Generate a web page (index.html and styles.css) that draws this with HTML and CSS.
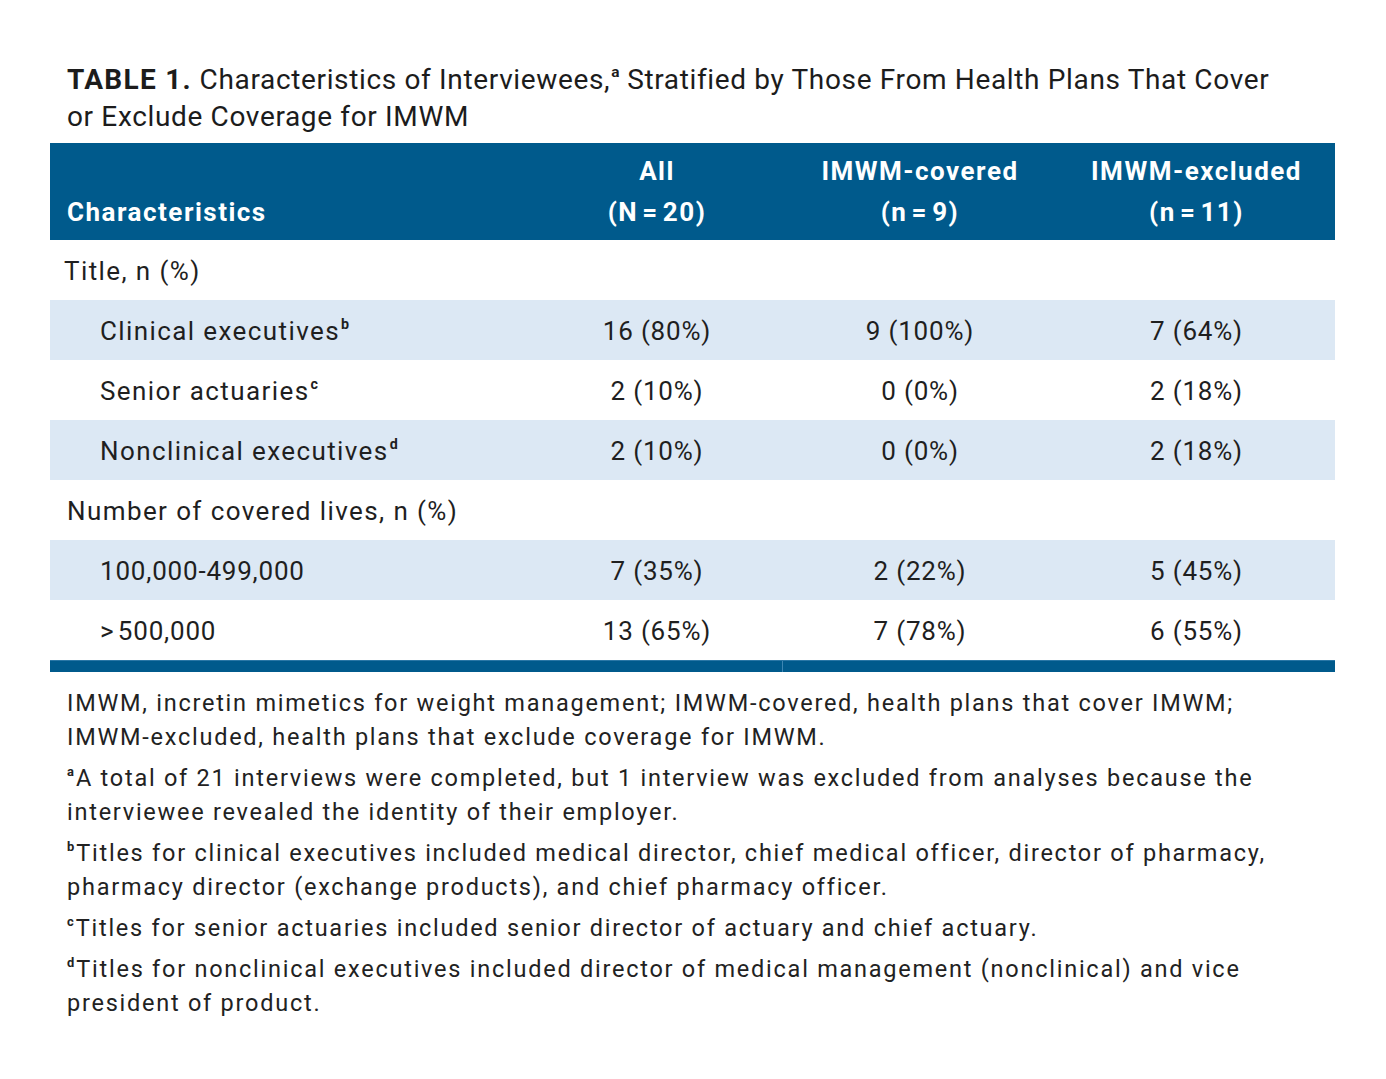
FILE: index.html
```html
<!DOCTYPE html>
<html lang="en">
<head>
<meta charset="utf-8">
<title>Table 1</title>
<link rel="stylesheet" href="styles.css">
</head>
<body>
<div class="page">
  <h1 class="caption"><span class="label">TABLE 1.</span> Characteristics of Interviewees,<sup class="fn">a</sup> Stratified by Those From Health Plans That Cover or Exclude Coverage for IMWM</h1>
  <table class="data">
    <colgroup>
      <col class="c0"><col class="c1"><col class="c2"><col class="c3">
    </colgroup>
    <thead>
      <tr>
        <th class="first">Characteristics</th>
        <th>All<br>(N&#8202;=&#8202;20)</th>
        <th>IMWM-covered<br>(n&#8202;=&#8202;9)</th>
        <th>IMWM-excluded<br>(n&#8202;=&#8202;11)</th>
      </tr>
    </thead>
    <tbody>
      <tr class="group"><td class="first g1">Title, n (%)</td><td></td><td></td><td></td></tr>
      <tr class="shade"><td class="first sub">Clinical executives<sup class="fn">b</sup></td><td class="num">16 (80%)</td><td class="num">9 (100%)</td><td class="num">7 (64%)</td></tr>
      <tr><td class="first sub">Senior actuaries<sup class="fn">c</sup></td><td class="num">2 (10%)</td><td class="num">0 (0%)</td><td class="num">2 (18%)</td></tr>
      <tr class="shade"><td class="first sub">Nonclinical executives<sup class="fn">d</sup></td><td class="num">2 (10%)</td><td class="num">0 (0%)</td><td class="num">2 (18%)</td></tr>
      <tr class="group"><td class="first">Number of covered lives, n (%)</td><td></td><td></td><td></td></tr>
      <tr class="shade"><td class="first sub num">100,000-499,000</td><td class="num">7 (35%)</td><td class="num">2 (22%)</td><td class="num">5 (45%)</td></tr>
      <tr><td class="first sub num">&gt;&#8202;500,000</td><td class="num">13 (65%)</td><td class="num">7 (78%)</td><td class="num">6 (55%)</td></tr>
    </tbody>
    <tfoot>
      <tr class="bar"><td colspan="2"></td><td class="seam" colspan="2"></td></tr>
    </tfoot>
  </table>
  <div class="notes">
    <p>IMWM, incretin mimetics for weight management; IMWM-covered, health plans that cover IMWM; IMWM-excluded, health plans that exclude coverage for IMWM.</p>
    <p><sup class="fn lead">a</sup>A total of 21 interviews were completed, but 1 interview was excluded from analyses because the interviewee revealed the identity of their employer.</p>
    <p><sup class="fn lead">b</sup>Titles for clinical executives included medical director, chief medical officer, director of pharmacy, pharmacy director (exchange products), and chief pharmacy officer.</p>
    <p><sup class="fn lead">c</sup>Titles for senior actuaries included senior director of actuary and chief actuary.</p>
    <p><sup class="fn lead">d</sup>Titles for nonclinical executives included director of medical management (nonclinical) and vice president of product.</p>
  </div>
</div>
</body>
</html>
```

FILE: styles.css
```css
html, body {
  margin: 0;
  padding: 0;
  background: #ffffff;
}
body {
  font-family: Roboto, "Liberation Sans", sans-serif;
  color: #1f1f1f;
}
.page {
  padding: 61px 51px 0 50px;
}
.caption {
  width: 1215px;
  margin: 0 0 8px 17px;
  font-size: 28px;
  font-weight: 400;
  line-height: 37px;
  letter-spacing: 0.65px;
  color: #1c1c1c;
}
.caption .label {
  font-weight: 700;
  letter-spacing: 1.3px;
}
.fn {
  font-size: 0.55em;
  font-weight: 700;
  vertical-align: 0.75em;
  line-height: 1;
  letter-spacing: 0;
  margin-left: 1px;
}
.fn.lead {
  margin-left: 0;
  margin-right: 2px;
}
.data {
  width: 100%;
  border-collapse: collapse;
  table-layout: fixed;
  font-size: 26px;
  letter-spacing: 1.4px;
}
.c0 { width: 482px; }
.c1 { width: 250px; }
.c2 { width: 276px; }
.c3 { width: 277px; }
.data thead tr {
  background: #005a8c;
  color: #ffffff;
  height: 97px;
}
.data th {
  font-weight: 700;
  text-align: center;
  vertical-align: bottom;
  line-height: 41px;
  padding: 0 0 7px;
  letter-spacing: 1.5px;
}
.data th.first {
  text-align: left;
  padding-left: 17px;
}
.data tbody tr {
  height: 60px;
}
.data td {
  text-align: center;
  vertical-align: middle;
  padding: 2px 0 0;
  line-height: 30px;
}
.data td.num {
  letter-spacing: 0.8px;
}
.data td.first {
  text-align: left;
  padding-left: 17px;
}
.data td.g1 {
  padding-left: 14px;
}
.data td.sub {
  padding-left: 50px;
}
.data tr.shade {
  background: #dce8f4;
}
.data tr.bar {
  height: 12px;
  background: #005a8c;
}
.data tr.bar td {
  padding: 0;
  line-height: 0;
  font-size: 0;
  border-top: 1px solid #2a77a6;
}
.data tr.bar td.seam {
  border-left: 1px solid #3d86b3;
}
.notes {
  width: 1235px;
  padding: 14px 0 0 17px;
  font-size: 23.5px;
  line-height: 34px;
  letter-spacing: 1.75px;
  color: #222222;
}
.notes p {
  margin: 0 0 7px;
}
```
